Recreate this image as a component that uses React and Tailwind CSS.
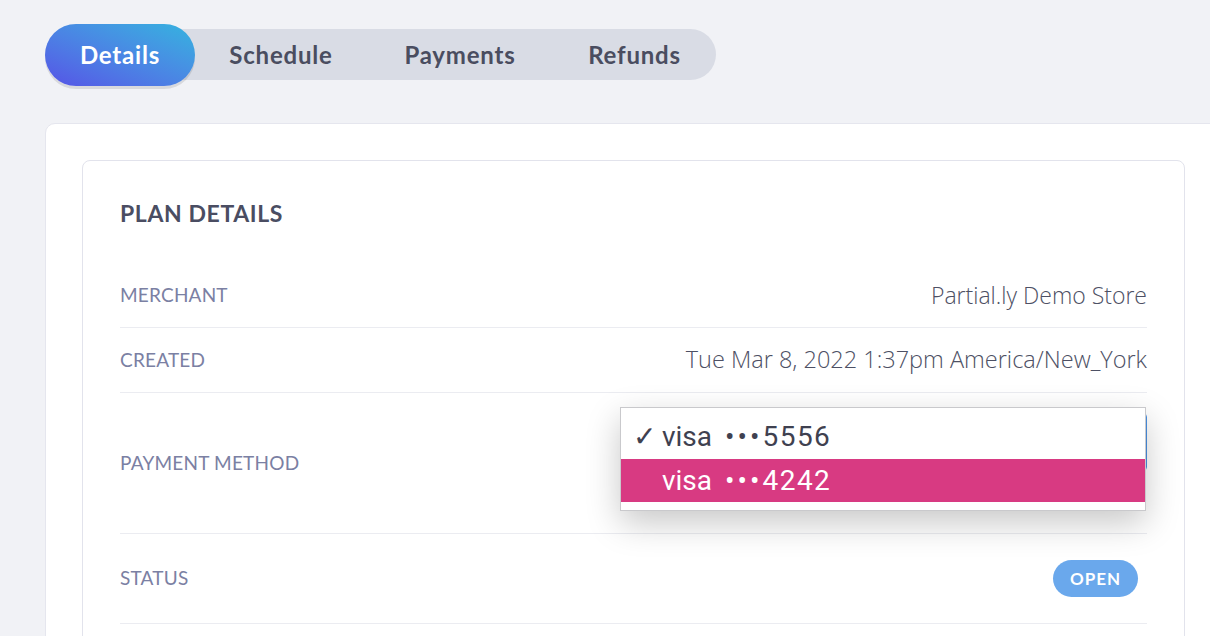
import { useState } from 'react'

const tabs = [
  { label: 'Details', w: 'w-[150px]' },
  { label: 'Schedule', w: 'w-[172px]' },
  { label: 'Payments', w: 'w-[186px]' },
  { label: 'Refunds', w: 'w-[163px]' },
]

function Row({ label, children, className = '' }) {
  return (
    <div className={`relative flex items-center justify-between border-b border-[#ebecf1] ${className}`}>
      <span className="text-[19px] text-[#7b80a3] uppercase tracking-[0.2px]">{label}</span>
      {children}
    </div>
  )
}

function CardOption({ last4 }) {
  return (
    <span>
      visa<span className="ml-[13px] tracking-[3px]">•••</span>
      <span className="tracking-[1.5px]">{last4}</span>
    </span>
  )
}

export default function App() {
  const [active] = useState('Details')

  return (
    <div
      className="w-[1210px] h-[636px] overflow-hidden bg-[#f1f2f6]"
      style={{ fontFamily: 'Lato, "Open Sans", sans-serif' }}
    >
      {/* Tabs */}
      <div className="pt-[29px] pl-[45px]">
        <div className="flex items-center h-[51px] w-[671px] bg-[#d9dce5] rounded-full">
          {tabs.map((t) =>
            t.label === active ? (
              <button
                key={t.label}
                className={`${t.w} h-[62px] shrink-0 rounded-full bg-gradient-to-tr from-[#5552e6] to-[#33b3df] text-white text-[24px] font-bold tracking-[0.8px] shadow-[0_3px_0_rgba(0,0,0,0.1)]`}
              >
                {t.label}
              </button>
            ) : (
              <button key={t.label} className={`${t.w} h-full shrink-0 text-[#4a4d60] text-[24px] font-bold tracking-[0.8px]`}>
                {t.label}
              </button>
            )
          )}
        </div>
      </div>

      {/* Outer card */}
      <div className="mt-[43px] ml-[45px] w-[1200px] bg-white border border-[#e5e6ee] rounded-tl-[10px] pt-[36px] pl-[36px]">
        <div className="w-[1103px] border border-[#e2e3ec] rounded-[8px] px-[37px] pt-[38px]">
          <h2 className="text-[23px] leading-[28px] font-bold text-[#4a4d62] tracking-[0.6px] mb-[36px]">PLAN DETAILS</h2>

          <Row label="Merchant" className="h-[65px]">
            <span className="text-[23px] font-light text-[#4d5064]" style={{ fontFamily: '"Open Sans", sans-serif' }}>
              Partial.ly Demo Store
            </span>
          </Row>

          <Row label="Created" className="h-[65px]">
            <span className="text-[23.5px] font-light text-[#4d5064]" style={{ fontFamily: '"Open Sans", sans-serif' }}>
              Tue Mar 8, 2022 1:37pm America/New_York
            </span>
          </Row>

          <Row label="Payment method" className="h-[141px]">
            <div className="flex flex-col items-end">
              <div className="w-[346px] h-[58px] border border-[#4a90e2] rounded-[4px] bg-white" />
              <span className="mt-[16px] mr-[40px] text-[18px] leading-[26px] text-[#4d5064]" style={{ fontFamily: '"Open Sans", sans-serif' }}>
                Update payment method
              </span>
            </div>

            {/* open select menu */}
            <div
              className="absolute top-[14px] right-[1px] w-[526px] bg-white border border-[#c9c9cc] pt-[7px] pb-[8px] shadow-[0_12px_34px_rgba(0,0,0,0.22)]"
              style={{ fontFamily: 'Roboto, "Liberation Sans", sans-serif' }}
            >
              <div className="h-[44px] flex items-center pl-[12px] text-[28px] text-[#3f4150]">
                <span className="w-[29px]">✓</span>
                <CardOption last4="5556" />
              </div>
              <div className="h-[43px] flex items-center pl-[41px] text-[28px] text-white bg-[#d83a82]">
                <CardOption last4="4242" />
              </div>
            </div>
          </Row>

          <Row label="Status" className="h-[90px]">
            <span className="mr-[9px] w-[85px] h-[37px] rounded-full bg-[#6aa8ec] text-white text-[17px] font-bold tracking-[1px] flex items-center justify-center">
              OPEN
            </span>
          </Row>

          <div className="h-[40px]" />
        </div>
      </div>
    </div>
  )
}
